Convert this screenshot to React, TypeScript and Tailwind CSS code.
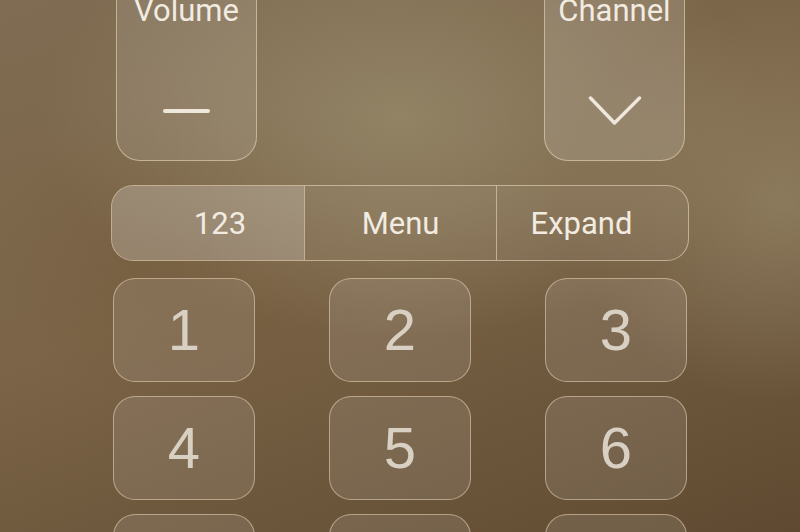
import React from "react";

const digits = ["1", "2", "3", "4", "5", "6", "7", "8", "9"];

export default function App() {
  return (
    <div className="w-[800px] h-[532px] overflow-hidden bg-[radial-gradient(ellipse_360px_220px_at_50%_22%,rgba(150,136,106,0.85)_0%,rgba(150,136,106,0)_100%),radial-gradient(ellipse_220px_200px_at_98%_38%,rgba(160,146,116,0.55)_0%,rgba(160,146,116,0)_100%),radial-gradient(ellipse_200px_160px_at_25%_48%,rgba(110,80,50,0.35)_0%,rgba(110,80,50,0)_100%),linear-gradient(160deg,#7f6c52_0%,#7b6447_45%,#5f4a31_100%)] font-['Roboto',_'Liberation_Sans',_sans-serif]">
      <div className="w-[578px] ml-[111px] flex flex-col">
        {/* Top row */}
        <div className="flex justify-between pl-[5px] pr-[4px] -mt-[40px]">
          <div className="w-[141px] h-[201px] rounded-[24px] border border-[rgba(235,215,185,0.6)] bg-[rgba(255,255,255,0.1)] flex flex-col items-center">
            <span className="mt-[34px] text-[31px] leading-[32px] text-[#f2ebe1]">Volume</span>
            <div className="mt-[82px] w-[47px] h-[4px] rounded-full bg-[#efe7dc]" />
          </div>
          <div className="w-[141px] h-[201px] rounded-[24px] border border-[rgba(235,215,185,0.6)] bg-[rgba(255,255,255,0.13)] flex flex-col items-center">
            <span className="mt-[34px] text-[31px] leading-[32px] text-[#f2ebe1]">Channel</span>
            <svg className="mt-[68px]" width="54" height="30" viewBox="0 0 54 30" fill="none">
              <path d="M2.5 3 L26.5 28 L51.5 3" stroke="#efe7dc" strokeWidth="3.4" strokeLinecap="round" strokeLinejoin="round" />
            </svg>
          </div>
        </div>

        {/* Segmented bar */}
        <div className="mt-[24px] h-[76px] rounded-[22px] border border-[rgba(235,215,185,0.6)] bg-[rgba(255,255,255,0.05)] grid grid-cols-3 overflow-hidden">
          <div className="flex items-center justify-center pl-[24px] pt-[3px] bg-[rgba(255,255,255,0.18)] text-[31px] text-[#f2ebe1]">123</div>
          <div className="flex items-center justify-center pt-[3px] border-l border-[rgba(235,215,185,0.6)] text-[31px] text-[#f2ebe1]">Menu</div>
          <div className="flex items-center justify-center pr-[22px] pt-[3px] border-l border-[rgba(235,215,185,0.6)] text-[31px] text-[#f2ebe1]">Expand</div>
        </div>

        {/* Number grid */}
        <div className="mt-[17px] w-[574px] mx-auto grid grid-cols-[142px_142px_142px] justify-between gap-y-[14px]">
          {digits.map((d) => (
            <div
              key={d}
              className="h-[104px] rounded-[22px] border border-[rgba(235,215,185,0.55)] bg-[rgba(255,255,255,0.1)] flex items-center justify-center font-['Liberation_Sans',_Arial,_sans-serif] text-[58px] leading-none text-[#d9d0c4]"
            >
              {d}
            </div>
          ))}
        </div>
      </div>
    </div>
  );
}
